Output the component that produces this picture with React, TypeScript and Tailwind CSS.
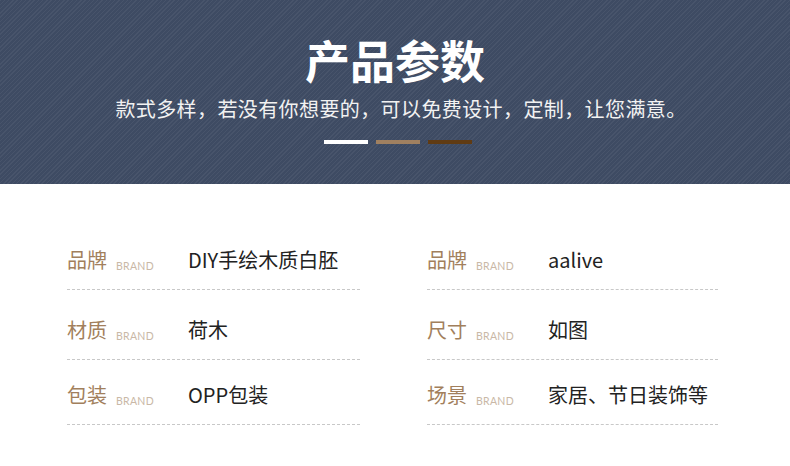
const rows = [
  [
    { label: "品牌", value: "DIY手绘木质白胚" },
    { label: "品牌", value: "aalive" },
  ],
  [
    { label: "材质", value: "荷木" },
    { label: "尺寸", value: "如图" },
  ],
  [
    { label: "包装", value: "OPP包装" },
    { label: "场景", value: "家居、节日装饰等" },
  ],
];

const rowTop = ["mt-[64px]", "mt-[28px]", "mt-[23px]"];

function Cell({ label, value }: { label: string; value: string }) {
  return (
    <div className="border-b border-dashed border-[#c8c8c8] pb-[17px]">
      <div className="flex h-6 items-center">
        <div className="flex w-[121px] items-end">
          <span className="text-[20px] leading-6 text-[#a27f5c]">{label}</span>
          <span className="ml-[9px] mb-[1px] text-[10.5px] leading-none tracking-[0.3px] text-[#c9b8a6] font-['Lato',sans-serif]">
            BRAND
          </span>
        </div>
        <span className="text-[20px] leading-6 text-[#222]">{value}</span>
      </div>
    </div>
  );
}

export default function App() {
  return (
    <main className="h-[466px] w-[790px] overflow-hidden bg-white font-['Noto_Sans_CJK_SC','Noto_Sans',sans-serif]">
      <section className="flex h-[184px] flex-col items-center bg-[#3e4b63] bg-[repeating-linear-gradient(135deg,rgba(255,255,255,0.05)_0px,rgba(255,255,255,0.05)_1px,transparent_1px,transparent_3px)] pt-[30px]">
        <h1 className="text-[45px] font-bold leading-[60px] text-white">产品参数</h1>
        <p className="ml-[12px] mt-[5px] text-[20px] leading-[28px] tracking-[0.4px] text-[#f2f2f2]">
          款式多样，若没有你想要的，可以免费设计，定制，让您满意。
        </p>
        <div className="ml-[6px] mt-[17px] flex gap-2">
          <div className="h-1 w-11 bg-white" />
          <div className="h-1 w-11 bg-[#a08060]" />
          <div className="h-1 w-11 bg-[#603b13]" />
        </div>
      </section>

      <section className="px-[67px]">
        {rows.map((pair, i) => (
          <div key={i} className={`grid grid-cols-[293px_291px] gap-x-[67px] ${rowTop[i]}`}>
            <Cell {...pair[0]} />
            <Cell {...pair[1]} />
          </div>
        ))}
      </section>
    </main>
  );
}
